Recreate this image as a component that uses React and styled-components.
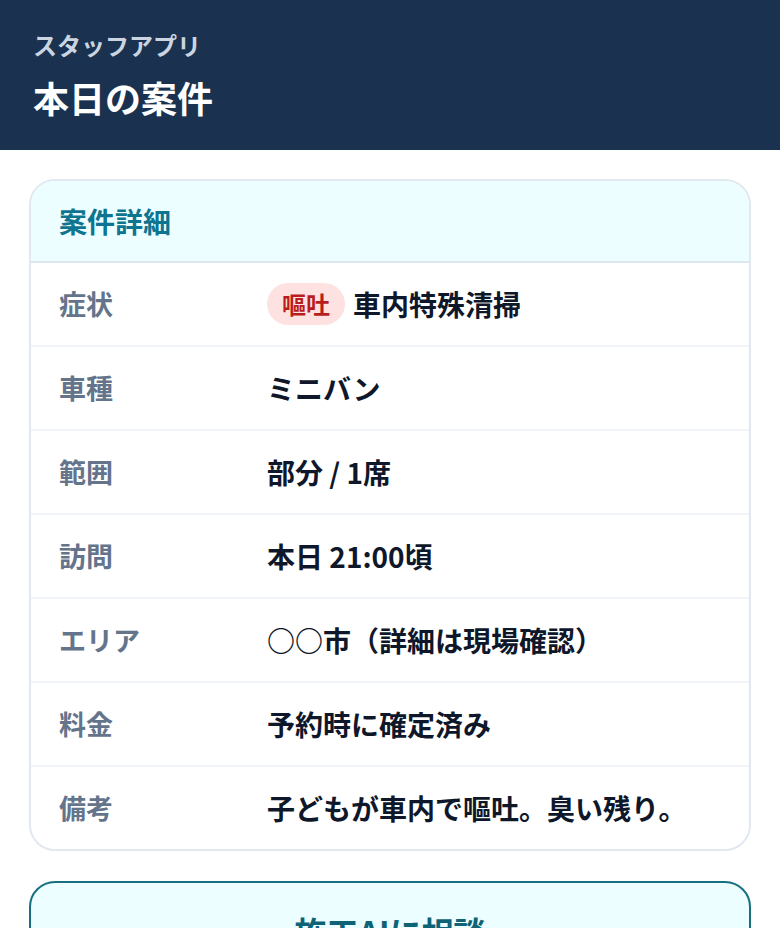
import React from 'react';
import styled, { createGlobalStyle } from 'styled-components';

const GlobalStyle = createGlobalStyle`
    html, body {
        margin: 0;
        padding: 0;
        background: #ffffff;
    }
    body {
        font-family: "Noto Sans CJK JP", "Noto Sans", sans-serif;
        -webkit-font-smoothing: antialiased;
    }
`;

const Page = styled.div`
    width: 780px;
    min-height: 928px;
    background: #ffffff;
`;

const Header = styled.header`
    background: #1a324f;
    padding: 28px 33px 28px;
    display: flex;
    flex-direction: column;
    gap: 10px;
`;

const AppName = styled.div`
    font-size: 24px;
    line-height: 34px;
    font-weight: 700;
    color: #cbd5e1;
`;

const Title = styled.h1`
    margin: 0;
    font-size: 36px;
    line-height: 50px;
    font-weight: 700;
    color: #ffffff;
`;

const Main = styled.main`
    padding: 29px 29px;
    display: flex;
    flex-direction: column;
    gap: 30px;
`;

const Card = styled.section`
    border: 2px solid #e2e8f0;
    border-radius: 26px;
    overflow: hidden;
    background: #ffffff;
`;

const CardHeader = styled.div`
    background: #ecfeff;
    border-bottom: 2px solid #dbe8ee;
    padding: 22px 28px;
    font-size: 28px;
    line-height: 36px;
    font-weight: 700;
    color: #0e7490;
`;

const Row = styled.div`
    display: grid;
    grid-template-columns: 208px 1fr;
    align-items: center;
    padding: 20px 28px;
    border-top: ${props => props.first ? 'none' : '2px solid #f1f5f9'};
`;

const Label = styled.div`
    font-size: 27px;
    line-height: 42px;
    font-weight: 700;
    color: #64748b;
`;

const Value = styled.div`
    display: flex;
    align-items: center;
    gap: 8px;
    font-size: 28px;
    line-height: 42px;
    font-weight: 700;
    color: #0f172a;
`;

const Badge = styled.span`
    display: inline-flex;
    align-items: center;
    justify-content: center;
    height: 42px;
    padding: 0 15px;
    border-radius: 21px;
    background: #fee2e2;
    color: #b91c1c;
    font-size: 24px;
    font-weight: 700;
`;

const ConsultButton = styled.button`
    font-family: inherit;
    width: 100%;
    border: 2px solid #16707f;
    border-radius: 26px;
    background: #ecfeff;
    padding: 26px 20px;
    font-size: 32px;
    line-height: 44px;
    font-weight: 700;
    color: #0e6476;
    text-align: center;
`;

const rows = [
    { label: '症状', value: '車内特殊清掃', badge: '嘔吐' },
    { label: '車種', value: 'ミニバン' },
    { label: '範囲', value: '部分 / 1席' },
    { label: '訪問', value: '本日 21:00頃' },
    { label: 'エリア', value: '○○市（詳細は現場確認）' },
    { label: '料金', value: '予約時に確定済み' },
    { label: '備考', value: '子どもが車内で嘔吐。臭い残り。' },
];

export default function App() {
    return (
        <Page>
            <GlobalStyle />
            <Header>
                <AppName>スタッフアプリ</AppName>
                <Title>本日の案件</Title>
            </Header>
            <Main>
                <Card>
                    <CardHeader>案件詳細</CardHeader>
                    {rows.map((row, i) => (
                        <Row key={row.label} first={i === 0}>
                            <Label>{row.label}</Label>
                            <Value>
                                {row.badge && <Badge>{row.badge}</Badge>}
                                {row.value}
                            </Value>
                        </Row>
                    ))}
                </Card>
                <ConsultButton>施工AIに相談</ConsultButton>
            </Main>
        </Page>
    );
}
